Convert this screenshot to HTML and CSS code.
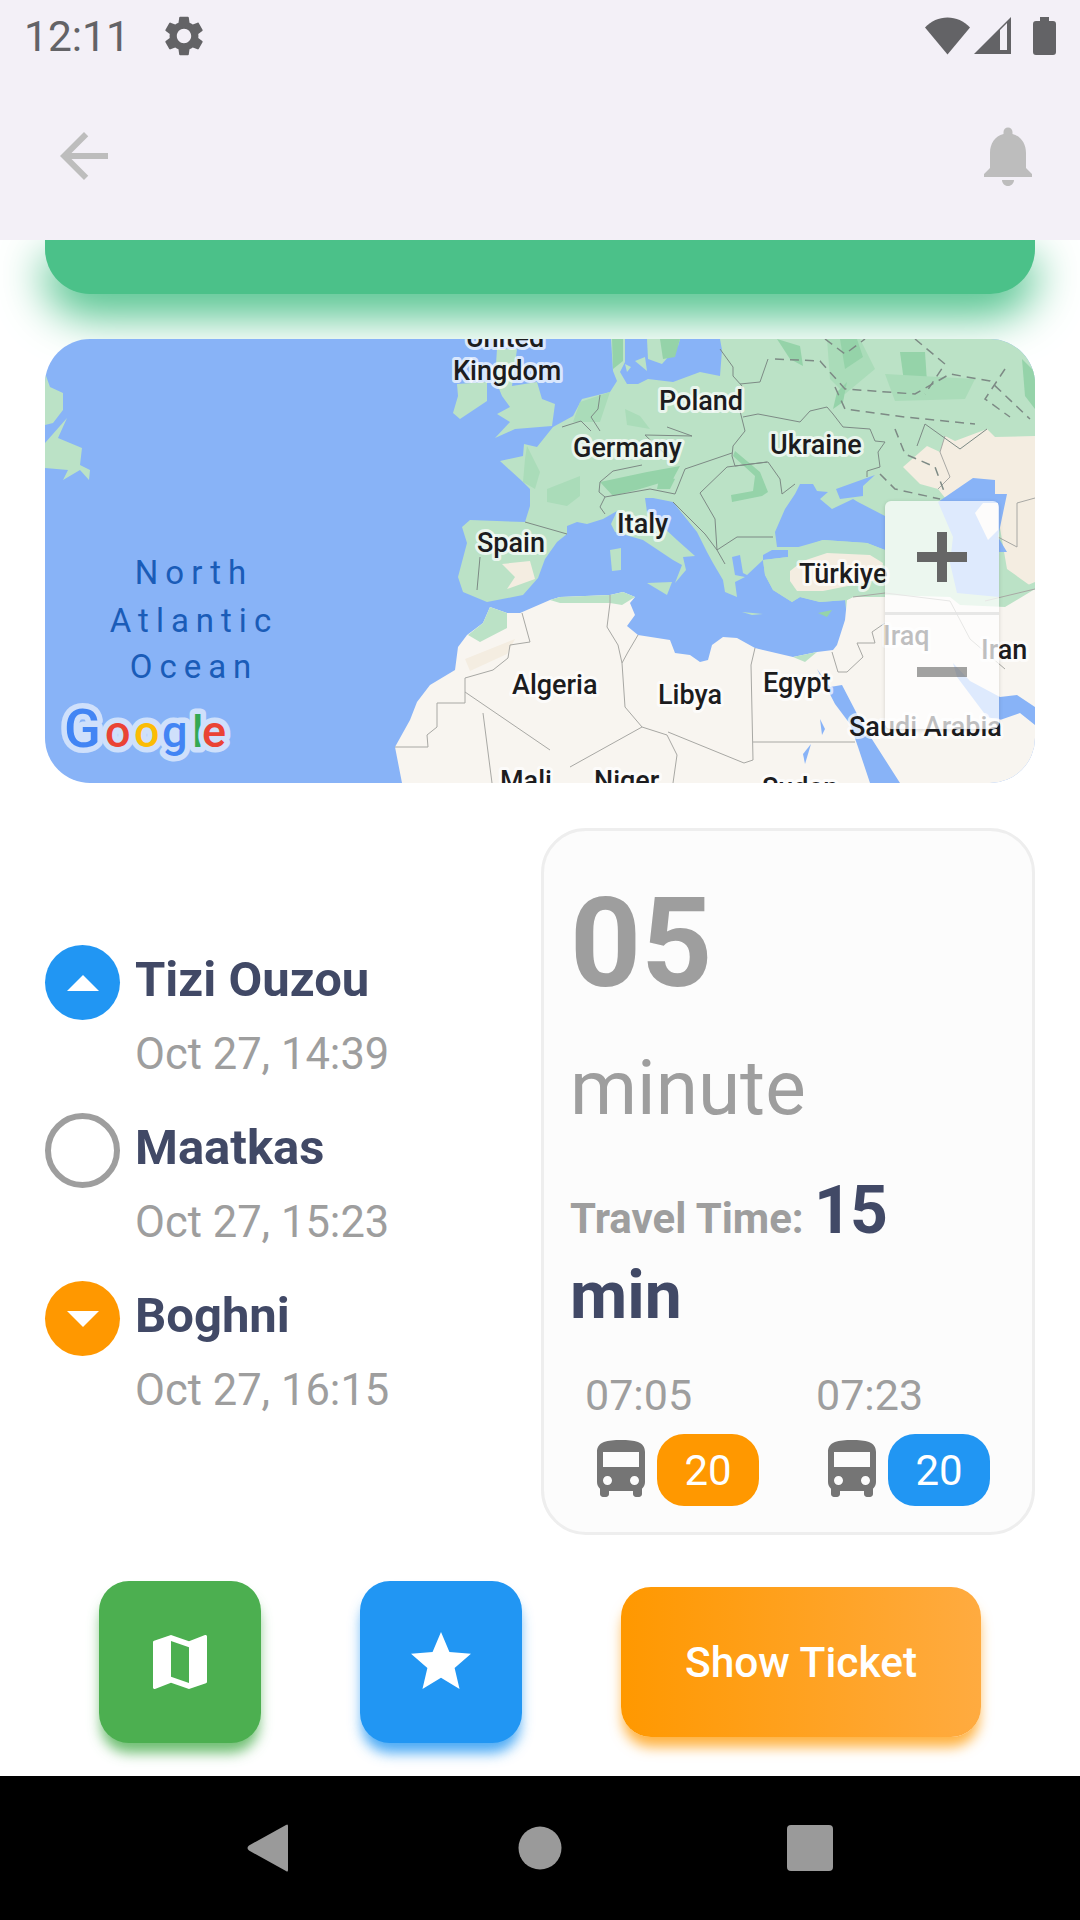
FILE: index.html
```html
<!DOCTYPE html>
<html lang="en">
<head>
    <meta charset="UTF-8">
    <meta name="viewport" content="width=device-width, initial-scale=1.0">
    <title>Trip details</title>
    <link rel="stylesheet" href="styles.css">
</head>
<body>
    <div class="screen">
        <header class="top">
            <div class="status-bar">
                <span class="clock">12:11</span>
                <svg class="gear" viewBox="0 0 24 24"><path d="M19.14 12.94c.04-.3.06-.61.06-.94 0-.32-.02-.64-.07-.94l2.03-1.58c.18-.14.23-.41.12-.61l-1.92-3.32c-.12-.22-.37-.29-.59-.22l-2.39.96c-.5-.38-1.03-.7-1.62-.94l-.36-2.54c-.04-.24-.24-.41-.48-.41h-3.84c-.24 0-.43.17-.47.41l-.36 2.54c-.59.24-1.13.57-1.62.94l-2.39-.96c-.22-.08-.47 0-.59.22L2.74 8.87c-.12.21-.08.47.12.61l2.03 1.58c-.05.3-.09.63-.09.94s.02.64.07.94l-2.03 1.58c-.18.14-.23.41-.12.61l1.92 3.32c.12.22.37.29.59.22l2.39-.96c.5.38 1.03.7 1.62.94l.36 2.54c.05.24.24.41.48.41h3.84c.24 0 .44-.17.47-.41l.36-2.54c.59-.24 1.13-.56 1.62-.94l2.39.96c.22.08.47 0 .59-.22l1.92-3.32c.12-.22.07-.47-.12-.61l-2.01-1.58zM12 15.6c-1.98 0-3.6-1.62-3.6-3.6s1.62-3.6 3.6-3.6 3.6 1.62 3.6 3.6-1.62 3.6-3.6 3.6z"/></svg>
                <div class="status-icons">
                    <svg class="wifi" viewBox="0 0 45 38"><path d="M22.5 37.5 0 10.5C6 4 14 0.5 22.5 0.5S39 4 45 10.5z"/></svg>
                    <svg class="signal" viewBox="0 0 38 38"><path fill-rule="evenodd" d="M37 0V37H0zM26 13V33H33V6z"/></svg>
                    <svg class="battery" viewBox="0 0 23 38"><path d="M7 0H16V4H20Q23 4 23 7V35Q23 38 20 38H3Q0 38 0 35V7Q0 4 3 4H7z"/></svg>
                </div>
            </div>
            <div class="app-bar">
                <svg class="bar-icon" viewBox="0 0 24 24"><path d="M20 11H7.83l5.59-5.59L12 4l-8 8 8 8 1.41-1.41L7.83 13H20v-2z"/></svg>
                <svg class="bar-icon" viewBox="0 0 24 24"><path d="M12 22c1.1 0 2-.9 2-2h-4c0 1.1.89 2 2 2zm6-6v-5c0-3.07-1.64-5.64-4.5-6.32V4c0-.83-.67-1.5-1.5-1.5s-1.5.67-1.5 1.5v.68C7.63 5.36 6 7.92 6 11v5l-2 2v1h16v-1l-2-2z"/></svg>
            </div>
        </header>

        <main class="content">
            <div class="route-card"></div>

            <div class="map">
                <svg class="map-art" viewBox="0 0 990 444">
                    <rect class="sea" width="990" height="444"/>

                    <!-- iceland / far left -->
                    <path class="land" d="M0 34 5 48 18 54 18 71 8 84 0 86z"/>
                    <path class="land" d="M22 79 13 99 37 109 35 126 45 131 44 141 35 131 18 141 23 131 0 129V104z"/>
                    <!-- british isles -->
                    <path class="land" d="M412 45 442 43 442 62 415 80 408 74 413 57z"/>
                    <path class="land" d="M452 10 472 10 467 47 492 43 497 60 510 65 507 87 470 90 450 99 465 83 452 75 465 68 457 57 450 40z"/>

                    <!-- europe -->
                    <path class="land" d="M455 122 478 117 479 105 492 108 508 88 528 77 537 60 565 53 572 42 568 32 566 0H580L580 23 575 33 582 45 593 45 603 40 628 43 655 33 675 37 677 11 675 0H990V310H560L505 262 478 256 442 263 418 253 413 238 422 204 417 188 425 181 480 183 485 167 485 150 478 143z"/>
                    <path class="land" d="M602 0H635L633 7 617 25 603 20z"/>
                    <path class="land" d="M590 22 600 18 602 32z"/>
                    <path class="land" d="M580 25 586 28 582 33z"/>

                    <!-- relief -->
                    <path class="land-pale" d="M535 63 565 53 555 83 528 83z"/>
                    <path class="land-pale" d="M580 70 595 77 605 90 582 86z"/>
                    <path class="land-pale" d="M482 107 495 133 490 150 478 143 480 120z"/>
                    <path class="land-pale" d="M502 150 535 137 535 157 522 167 502 163z"/>
                    <path class="land-dark" d="M555 143 602 133 635 127 628 140 595 150 568 157z"/>
                    <path class="land-dark" d="M615 135 630 140 625 150 612 150z"/>
                    <path class="land-dark" d="M690 112 715 133 723 153 717 157 687 163 686 156 708 152 710 137 688 117z"/>
                    <path class="land-pale" d="M782 0H815L830 30 800 55 785 40z"/>
                    <path class="land-dark" d="M795 0H812L818 18 800 30z"/>
                    <path class="land-dark" d="M855 13 880 13 882 43 860 50z"/>
                    <path class="land-dark" d="M792 53 802 43 798 63 788 70z"/>
                    <path class="land-dark" d="M977 20 990 33V70L980 57z"/>
                    <path class="land-dark" d="M732 0 755 7 758 27 745 20z"/>
                    <path class="land-dark" d="M615 0H635L630 18 618 20z"/>
                    <path class="land-dark" d="M567 0H578L578 22 568 30z"/>
                    <path class="land-pale" d="M840 35 930 40 920 60 850 62z"/>

                    <!-- black sea, azov -->
                    <path class="sea" d="M730 193 740 170 750 155 755 145 768 145 772 152 783 153 775 160 787 170 808 160 813 163 840 177 840 211 822 204 778 201 758 208 732 208z"/>
                    <path class="sea" d="M791 150 830 136 818 147 818 157 795 160z"/>

                    <!-- mediterranean -->
                    <path class="sea" d="M478 256 493 239 500 220 512 203 522 195 522 187 532 183 542 185 558 180 572 172 566 185 570 193 598 201 628 221 637 226 630 244 641 231 638 218 650 217 632 201 602 173 600 159 608 159 628 163 652 193 662 213 668 224 678 241 680 253 692 258 690 243 700 238 690 236 687 218 695 216 698 234 702 236 718 221 743 218 743 211 727 211 718 216 718 221 720 236 728 251 747 263 755 258 775 263 800 261 802 279 792 320H500L478 268z"/>
                    <path class="land" d="M565 211 576 209 576 231 567 232z"/>
                    <path class="land" d="M602 244 627 243 622 256z"/>
                    <path class="land" d="M697 273 718 275 707 276z"/>
                    <path class="land-dark" d="M773 274 787 271 782 278z"/>

                    <!-- central asia -->
                    <path class="desert-warm" d="M858 128 882 107 895 113 900 97 910 102 942 90 950 98 990 97V250L962 230 950 160 930 160 905 165 893 150 875 145z"/>
                    <!-- caspian -->
                    <path class="sea" d="M893 163 928 139 950 141 950 155 962 155 953 198 962 213 954 213 954 258 912 254 905 224 908 198z"/>
                    <path class="desert" d="M938 164 953 164 953 191 943 201 930 174z"/>

                    <!-- africa and the middle east -->
                    <path class="desert" d="M357 444 350 408 365 381 372 363 385 346 410 331 413 308 422 296 438 284 445 268 462 274 475 274 505 261 515 258 565 256 578 253 590 258 585 264 590 276 582 287 593 296 625 301 630 314 645 316 655 323 663 321 667 306 678 298 692 299 710 309 748 318 772 313 788 311 792 306 800 281 802 261 808 258 840 256 905 258 960 258 990 250V444z"/>
                    <path class="land" d="M445 268 462 274 462 289 435 303 423 296 438 284z"/>
                    <path class="land" d="M505 261 515 258 565 256 578 253 590 258 577 266 565 264 515 264z"/>
                    <path class="land" d="M748 318 772 313 760 323z"/>
                    <path class="land" d="M905 258 954 258 990 243V250L960 268 915 266z"/>
                    <path class="desert-warm" d="M420 320 470 300 462 315 425 332z"/>
                    <!-- turkey -->
                    <path class="land" d="M720 236 718 221 743 218 743 211 778 201 822 204 840 211 840 258 808 258 802 261 775 263 755 258 747 263 728 251z"/>
                    <path class="desert-warm" d="M745 232 758 222 782 214 825 216 838 224 835 240 808 246 778 252 752 252 745 242z"/>
                    <path class="desert-warm" d="M457 225 485 222 490 240 462 250 470 238z"/>
                    <!-- red sea, gulf -->
                    <path class="sea" d="M772 330 785 348 797 346 810 371 816 383 855 444H825L813 408 805 385 790 365z"/>
                    <path class="sea" d="M908 324 925 342 955 358 972 356 990 368V386L975 374 955 381 942 378 912 338z"/>
                    <path class="sea" d="M775 380 780 390 777 396z"/>
                    <path class="sea" d="M758 415 766 405 760 425z"/>

                    <!-- borders -->
                    <g class="border">
                        <path d="M675 10 688 28 688 37 697 47 695 72 700 92 688 107 687 117 690 127"/>
                        <path d="M723 20 715 43 695 45"/>
                        <path d="M698 78 713 75 755 83 765 72 782 68 788 75 798 88 825 90 830 102 840 103 833 113 835 128 822 132 822 138"/>
                        <path d="M690 127 723 123 735 140 737 155 750 145"/>
                        <path d="M655 154 682 128 722 123"/>
                        <path d="M672 211 692 198 728 198"/>
                        <path d="M622 88 647 97 600 96 620 115"/>
                        <path d="M517 88 536 82 546 92"/>
                        <path d="M555 92 546 78 553 70 555 56"/>
                        <path d="M555 143 568 132 597 126"/>
                        <path d="M555 143 554 153 560 158 555 168 560 175"/>
                        <path d="M560 158 605 150 630 155 640 130 687 114"/>
                        <path d="M628 163 660 195 672 211 680 225"/>
                        <path d="M655 154 670 180 672 211"/>
                        <path d="M435 218 432 251"/>
                        <path d="M480 183 522 195"/>
                    </g>
                    <g class="border border-light">
                        <path d="M477 274 485 303 465 306 463 319 448 331 420 339 420 364 392 364 392 388 382 396 383 408 350 408"/>
                        <path d="M420 353 505 411"/>
                        <path d="M438 374 447 444"/>
                        <path d="M565 256 565 264 562 288 573 306 577 324 583 313 593 296"/>
                        <path d="M577 324 580 368 597 388 525 428"/>
                        <path d="M597 388 622 396 632 416 628 444"/>
                        <path d="M710 309 706 326 708 421 699 424 623 393"/>
                        <path d="M708 403 810 403"/>
                        <path d="M787 313 793 333 802 333 818 318 812 304 830 304 827 293 840 284"/>
                        <path d="M808 258 840 254 905 262 925 300 960 330"/>
                        <path d="M953 198 972 208 972 164 990 159"/>
                        <path d="M990 250 940 262"/>
                        <path d="M900 97 895 113 905 138 893 150"/>
                    </g>
                    <g class="border">
                        <path d="M942 90 915 110 880 85 872 107"/>
                    </g>
                    <g class="border border-dashed">
                        <path d="M730 20 775 22 800 50 870 55 905 35 945 42 985 80"/>
                        <path d="M790 48 800 70 860 78 930 85"/>
                        <path d="M850 90 860 115 890 128 900 155"/>
                        <path d="M835 135 850 150 895 160"/>
                        <path d="M780 0 800 15 820 0"/>
                        <path d="M870 0 900 25 880 55"/>
                        <path d="M960 30 940 60 965 78"/>
                    </g>

                    <!-- labels -->
                    <text class="label" x="460" y="8" text-anchor="middle">United</text>
                    <text class="label" x="408" y="41">Kingdom</text>
                    <text class="label" x="614" y="71">Poland</text>
                    <text class="label" x="528" y="118">Germany</text>
                    <text class="label" x="725" y="115">Ukraine</text>
                    <text class="label" x="432" y="213">Spain</text>
                    <text class="label" x="572" y="194">Italy</text>
                    <text class="label" x="754" y="244">Türkiye</text>
                    <text class="label" x="838" y="306">Iraq</text>
                    <text class="label" x="936" y="320">Iran</text>
                    <text class="label" x="467" y="355">Algeria</text>
                    <text class="label" x="613" y="365">Libya</text>
                    <text class="label" x="718" y="353">Egypt</text>
                    <text class="label" x="804" y="397">Saudi Arabia</text>
                    <text class="label" x="455" y="451">Mali</text>
                    <text class="label" x="549" y="451">Niger</text>
                    <text class="label" x="717" y="458">Sudan</text>

                    <text class="ocean" x="149" y="245" text-anchor="middle">North</text>
                    <text class="ocean" x="149" y="293" text-anchor="middle">Atlantic</text>
                    <text class="ocean" x="149" y="339" text-anchor="middle">Ocean</text>

                    <text class="google" y="408"><tspan class="google-cap" x="19" fill="#4285f4">G</tspan><tspan x="60" fill="#ea4335">o</tspan><tspan x="89" fill="#fbbc05">o</tspan><tspan x="117" fill="#4285f4">g</tspan><tspan x="147" fill="#34a853">l</tspan><tspan x="157" fill="#ea4335">e</tspan></text>
                </svg>

                <div class="zoom-box">
                    <div class="zoom-btn">
                        <svg viewBox="0 0 50 50"><path d="M20 0H30V20H50V30H30V50H20V30H0V20H20z"/></svg>
                    </div>
                    <div class="zoom-btn zoom-off">
                        <svg viewBox="0 0 50 50"><path d="M0 20H50V30H0z"/></svg>
                    </div>
                </div>
            </div>

            <section class="trip">
                <ul class="stops">
                    <li class="stop">
                        <span class="dot dot-start"><svg viewBox="0 0 32 16"><path d="M16 0 32 16H0z"/></svg></span>
                        <div>
                            <div class="stop-name">Tizi Ouzou</div>
                            <div class="stop-date">Oct 27, 14:39</div>
                        </div>
                    </li>
                    <li class="stop">
                        <span class="dot dot-mid"></span>
                        <div>
                            <div class="stop-name">Maatkas</div>
                            <div class="stop-date">Oct 27, 15:23</div>
                        </div>
                    </li>
                    <li class="stop">
                        <span class="dot dot-end"><svg viewBox="0 0 32 16"><path d="M0 0H32L16 16z"/></svg></span>
                        <div>
                            <div class="stop-name">Boghni</div>
                            <div class="stop-date">Oct 27, 16:15</div>
                        </div>
                    </li>
                </ul>

                <div class="wait-card">
                    <div class="wait-num">05</div>
                    <div class="wait-unit">minute</div>
                    <p class="travel"><span class="travel-label">Travel Time: </span><span class="travel-num">15</span> min</p>
                    <div class="buses">
                        <div class="bus">
                            <div class="bus-time">07:05</div>
                            <div class="bus-row">
                                <svg class="bus-icon" viewBox="0 0 24 24"><path d="M4 16c0 .88.39 1.67 1 2.22V20c0 .55.45 1 1 1h1c.55 0 1-.45 1-1v-1h8v1c0 .55.45 1 1 1h1c.55 0 1-.45 1-1v-1.78c.61-.55 1-1.34 1-2.22V6c0-3.5-3.58-4-8-4s-8 .5-8 4v10zm3.5 1c-.83 0-1.5-.67-1.5-1.5S6.67 14 7.5 14s1.5.67 1.5 1.5S8.33 17 7.5 17zm9 0c-.83 0-1.5-.67-1.5-1.5s.67-1.5 1.5-1.5 1.5.67 1.5 1.5-.67 1.5-1.5 1.5zm1.5-6H6V6h12v5z"/></svg>
                                <span class="badge badge-orange">20</span>
                            </div>
                        </div>
                        <div class="bus">
                            <div class="bus-time">07:23</div>
                            <div class="bus-row">
                                <svg class="bus-icon" viewBox="0 0 24 24"><path d="M4 16c0 .88.39 1.67 1 2.22V20c0 .55.45 1 1 1h1c.55 0 1-.45 1-1v-1h8v1c0 .55.45 1 1 1h1c.55 0 1-.45 1-1v-1.78c.61-.55 1-1.34 1-2.22V6c0-3.5-3.58-4-8-4s-8 .5-8 4v10zm3.5 1c-.83 0-1.5-.67-1.5-1.5S6.67 14 7.5 14s1.5.67 1.5 1.5S8.33 17 7.5 17zm9 0c-.83 0-1.5-.67-1.5-1.5s.67-1.5 1.5-1.5 1.5.67 1.5 1.5-.67 1.5-1.5 1.5zm1.5-6H6V6h12v5z"/></svg>
                                <span class="badge badge-blue">20</span>
                            </div>
                        </div>
                    </div>
                </div>
            </section>
        </main>

        <div class="actions">
            <button class="square-btn btn-green" type="button">
                <svg viewBox="0 0 24 24"><path d="M20.5 3l-.16.03L15 5.1 9 3 3.36 4.9c-.21.07-.36.25-.36.48V20.5c0 .28.22.5.5.5l.16-.03L9 18.9l6 2.1 5.64-1.9c.21-.07.36-.25.36-.48V3.5c0-.28-.22-.5-.5-.5zM15 19l-6-2.11V5l6 2.11V19z"/></svg>
            </button>
            <button class="square-btn btn-blue" type="button">
                <svg viewBox="0 0 24 24"><path d="M12 17.27L18.18 21l-1.64-7.03L22 9.24l-7.19-.61L12 2 9.19 8.63 2 9.24l5.46 4.73L5.82 21z"/></svg>
            </button>
            <button class="ticket-btn" type="button">Show Ticket</button>
        </div>

        <nav class="nav-bar">
            <svg viewBox="0 0 48 48"><path d="M40 1Q42 -.5 42 2V46Q42 48.500 40 47L3 26.500Q0 24 3 21.500z"/></svg>
            <svg viewBox="0 0 48 48"><circle cx="24" cy="24" r="21.500"/></svg>
            <svg viewBox="0 0 48 48"><rect x="1" y="1" width="46" height="46" rx="4"/></svg>
        </nav>
    </div>
</body>
</html>
```

FILE: styles.css
```css
* {
    box-sizing: border-box;
}

html, body {
    margin: 0;
    padding: 0;
}

body {
    font-family: Roboto, "Liberation Sans", sans-serif;
    background-color: white;
}

.screen {
    width: 1080px;
    height: 1920px;
    display: flex;
    flex-direction: column;
    overflow: hidden;
}

/* top */
.top {
    position: relative;
    z-index: 2;
    background-color: #f3f0f7;
}

.status-bar {
    height: 72px;
    display: flex;
    align-items: center;
    padding: 0 24px;
    color: #636366;
}

.clock {
    font-size: 42.500px;
    width: 136px;
}

.gear {
    width: 48px;
    height: 48px;
    fill: #636366;
}

.status-icons {
    margin-left: auto;
    display: flex;
    align-items: center;
    fill: #636366;
}

.wifi {
    width: 45px;
    height: 38px;
}

.signal {
    width: 38px;
    height: 38px;
    margin-left: 4px;
}

.battery {
    width: 23px;
    height: 38px;
    margin-left: 21px;
}

.app-bar {
    height: 168px;
    display: flex;
    justify-content: space-between;
    align-items: center;
    padding: 0 36px 0 48px;
}

.bar-icon {
    width: 72px;
    height: 72px;
    fill: #bdbdbd;
}

/* content */
.content {
    flex: 1;
    padding: 0 45px;
}

.route-card {
    height: 54px;
    background-color: #4bc189;
    border-radius: 0 0 45px 45px;
    box-shadow: 0 20px 45px 2px rgb(75, 193, 137);
    margin-bottom: 45px;
}

.map {
    position: relative;
    height: 444px;
    border-radius: 45px;
    overflow: hidden;
    margin-bottom: 45px;
}

.map-art {
    display: block;
    width: 990px;
    height: 444px;
}

.sea { fill: #88b3f7; }
.land { fill: #bbe2c6; }
.land-dark { fill: #95d3a9; }
.land-pale { fill: #aadcb9; }
.desert { fill: #f8f5f0; }
.desert-warm { fill: #f4ede1; }

.border path {
    fill: none;
    stroke: #7d8a85;
    stroke-width: 1;
}

.border-light path {
    stroke: #a8a8a4;
}

.border-dashed path {
    stroke-dasharray: 9 6;
    stroke-width: 1.500;
}

.label {
    font-size: 27px;
    font-weight: 500;
    fill: #1c1c1e;
    stroke: rgba(255, 255, 255, 0.7);
    stroke-width: 6px;
    stroke-linejoin: round;
    paint-order: stroke;
}

.ocean {
    font-size: 33px;
    letter-spacing: 7px;
    fill: #1a5cb8;
}

.google {
    font-size: 45px;
    font-weight: 500;
    stroke: #cfe0fb;
    stroke-width: 11px;
    stroke-linejoin: round;
    paint-order: stroke;
}

.google-cap {
    font-size: 54px;
}

.zoom-box {
    position: absolute;
    left: 840px;
    top: 162px;
    width: 114px;
    height: 228px;
    background-color: rgba(255, 255, 255, 0.72);
    border-radius: 6px;
    box-shadow: 0 1px 4px rgba(0, 0, 0, 0.15);
}

.zoom-btn {
    height: 114px;
    display: flex;
    align-items: center;
    justify-content: center;
    border-bottom: 3px solid rgba(225, 225, 225, 0.8);
}

.zoom-btn svg {
    width: 50px;
    height: 50px;
    fill: #666666;
}

.zoom-off {
    border-bottom: none;
}

.zoom-off svg {
    fill: rgba(102, 102, 102, 0.6);
}

/* trip */
.trip {
    display: flex;
    height: 707px;
}

.stops {
    list-style: none;
    margin: 11px 0 0 0;
    padding: 0;
    flex: 1;
    display: flex;
    flex-direction: column;
    justify-content: center;
    gap: 20px;
}

.stop {
    display: flex;
    gap: 15px;
}

.dot {
    width: 75px;
    height: 75px;
    border-radius: 50%;
    display: flex;
    align-items: center;
    justify-content: center;
}

.dot svg {
    width: 32px;
    height: 16px;
    fill: white;
}

.dot-start {
    background-color: #2196f3;
}

.dot-mid {
    border: 6px solid #9e9e9e;
}

.dot-end {
    background-color: #ff9800;
}

.stop-name {
    font-size: 49px;
    font-weight: 700;
    line-height: 69px;
    color: #414966;
}

.stop-date {
    font-size: 43.500px;
    line-height: 76px;
    margin-top: 3px;
    color: #9e9e9e;
}

.wait-card {
    width: 494px;
    height: 707px;
    background-color: #fcfcfc;
    border: 3px solid #eeeeee;
    border-radius: 45px;
    padding: 43px 24px 0 26px;
}

.wait-num {
    font-size: 124px;
    font-weight: 700;
    line-height: 140px;
    color: #9e9e9e;
}

.wait-unit {
    font-size: 76.500px;
    line-height: 88px;
    margin-top: 30px;
    color: #9e9e9e;
}

.travel {
    margin: 36px 30px 0 0;
    font-size: 66px;
    font-weight: 700;
    line-height: 85px;
    color: #414966;
}

.travel-label {
    font-size: 42px;
    line-height: 1;
    color: #9e9e9e;
}

.travel-num {
    letter-spacing: -2px;
}

.buses {
    display: flex;
    gap: 57px;
    margin: 32px 0 0 15px;
}

.bus-time {
    font-size: 43px;
    line-height: 50px;
    color: #9e9e9e;
}

.bus-row {
    display: flex;
    align-items: center;
    margin-top: 14px;
}

.bus-icon {
    width: 72px;
    height: 72px;
    fill: #757575;
}

.badge {
    width: 102px;
    height: 72px;
    border-radius: 27px;
    display: flex;
    align-items: center;
    justify-content: center;
    font-size: 42px;
    color: white;
}

.badge-orange {
    background-color: #ff9800;
}

.badge-blue {
    background-color: #2196f3;
}

/* buttons */
.actions {
    height: 195px;
    padding-bottom: 33px;
    display: flex;
    justify-content: space-evenly;
    align-items: center;
}

.square-btn {
    width: 162px;
    height: 162px;
    border: none;
    border-radius: 30px;
    padding: 0;
    display: flex;
    align-items: center;
    justify-content: center;
}

.square-btn svg {
    width: 72px;
    height: 72px;
    fill: white;
}

.btn-green {
    background-color: #4caf50;
    box-shadow: 0 12px 13px -2px rgba(76, 175, 80, 0.8);
}

.btn-blue {
    background-color: #2196f3;
    box-shadow: 0 12px 13px -2px rgba(33, 150, 243, 0.8);
}

.ticket-btn {
    width: 360px;
    height: 150px;
    border: none;
    border-radius: 30px;
    font-family: Roboto, "Liberation Sans", sans-serif;
    font-size: 42.500px;
    font-weight: 500;
    color: white;
    background: linear-gradient(to right, #ff9800, #ffab40);
    box-shadow: 0 12px 13px -2px rgba(255, 152, 0, 0.75);
}

/* android nav */
.nav-bar {
    height: 144px;
    background-color: black;
    display: grid;
    grid-template-columns: repeat(3, 270px);
    padding: 0 135px;
    justify-items: center;
    align-items: center;
}

.nav-bar svg {
    width: 48px;
    height: 48px;
    fill: #9a9a9a;
}
```
